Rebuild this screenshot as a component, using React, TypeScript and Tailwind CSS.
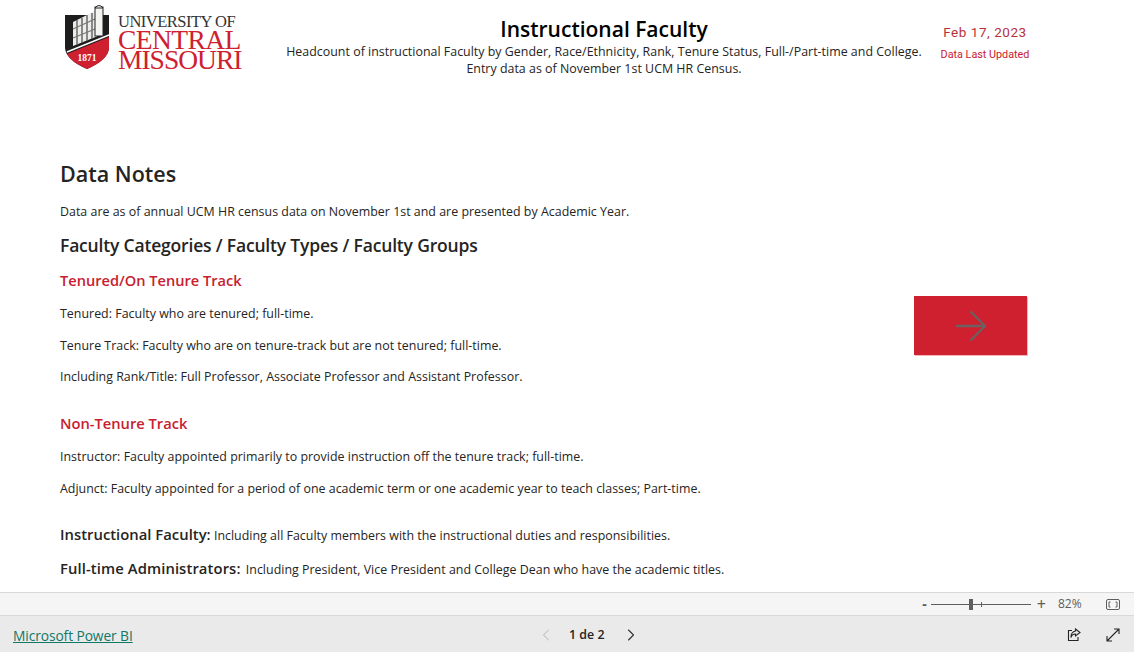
import { ChevronLeft, ChevronRight, ArrowRight } from "lucide-react";

const sans = "font-['Open_Sans','Noto_Sans',sans-serif]";

function Logo() {
  return (
    <div className="flex items-start w-[176px] h-[72px]">
      <svg width="46" height="68" viewBox="0 0 46 68" className="shrink-0 mt-[2px]">
        <path d="M1 11 L45 11 L45 44 Q44 56 23 65 Q2 56 1 44 Z" fill="#1d1d1d" />
        <path d="M9 18 L31 7 L39 7 L39 30 L9 42 Z" fill="#ecece9" />
        <path d="M13 16 v25 M18 14 v25 M23 11 v26 M28 9 v26" stroke="#555" strokeWidth="1.3" />
        <path d="M9 25 L31 15 M9 34 L31 25" stroke="#777" strokeWidth="1.1" />
        <rect x="31" y="3" width="8" height="29" fill="#f4f4f2" stroke="#222" strokeWidth="1" />
        <path d="M31 4 Q35 -1 39 4 Z" fill="#f4f4f2" stroke="#222" strokeWidth="1" />
        <path d="M3 50 L45 33 L45 44 Q44 56 23 65 Q7 58 3 50 Z" fill="#cf2030" />
        <path d="M3 48 L45 31" stroke="#fff" strokeWidth="1.5" />
        <text x="23" y="57" textAnchor="middle" fontSize="9.5" fontWeight="700" fill="#fff" fontFamily="Liberation Serif, serif">1871</text>
      </svg>
      <div className="ml-[8px] font-['Liberation_Serif',serif] leading-none mt-[12px]">
        <div className="text-[16.5px] leading-[15px] text-[#333] tracking-[-0.5px] whitespace-nowrap">UNIVERSITY OF</div>
        <div className="text-[27.5px] leading-[21px] text-[#cf2030] tracking-[-0.6px] whitespace-nowrap">CENTRAL</div>
        <div className="text-[27.5px] leading-[21px] text-[#cf2030] tracking-[-1px] whitespace-nowrap -mt-px">MISSOURI</div>
      </div>
    </div>
  );
}

function Header() {
  return (
    <header className="flex h-[78px] pl-[64px] pt-[2px]">
      <Logo />
      <div className="w-[660px] ml-[34px] text-center text-[#252423] pt-[13px]">
        <h1 className={`${sans} text-[21px] leading-[28px] font-semibold text-black`}>Instructional Faculty</h1>
        <p className={`${sans} text-[12.4px] leading-[17px] tracking-[0.02px] whitespace-nowrap`}>
          Headcount of instructional Faculty by Gender, Race/Ethnicity, Rank, Tenure Status, Full-/Part-time and College.
        </p>
        <p className={`${sans} text-[12.4px] leading-[17px] tracking-[0.02px]`}>Entry data as of November 1st UCM HR Census.</p>
      </div>
      <div className="ml-[6px] w-[90px] text-center text-[#c8202f] font-['Roboto',sans-serif] pt-[21px]">
        <div className="text-[13.5px] leading-[18px] tracking-[0.55px] text-[#b8323a] whitespace-nowrap">Feb 17, 2023</div>
        <div className="text-[10.8px] leading-[14px] mt-[7px] whitespace-nowrap">Data Last Updated</div>
      </div>
    </header>
  );
}

function Body({ children, className = "" }: { children: React.ReactNode; className?: string }) {
  return <p className={`${sans} text-[12.4px] leading-[18px] tracking-[0.02px] text-[#252423] whitespace-nowrap ${className}`}>{children}</p>;
}

function Notes() {
  return (
    <div className="w-[914px] shrink-0 pl-[60px] pt-[81px]">
      <h2 className={`${sans} text-[21.5px] leading-[30px] font-semibold text-[#252423]`}>Data Notes</h2>
      <Body className="mt-[14px]">Data are as of annual UCM HR census data on November 1st and are presented by Academic Year.</Body>
      <h3 className={`${sans} text-[17.5px] leading-[24px] font-semibold text-[#252423] mt-[12px] tracking-[-0.18px]`}>Faculty Categories / Faculty Types / Faculty Groups</h3>
      <h4 className={`${sans} text-[14.6px] leading-[20px] font-semibold text-[#c8202f] mt-[13px]`}>Tenured/On Tenure Track</h4>
      <Body className="mt-[15px]">Tenured: Faculty who are tenured; full-time.</Body>
      <Body className="mt-[14px]">Tenure Track: Faculty who are on tenure-track but are not tenured; full-time.</Body>
      <Body className="mt-[13px]">Including Rank/Title: Full Professor, Associate Professor and Assistant Professor.</Body>
      <h4 className={`${sans} text-[14.7px] leading-[20px] font-semibold text-[#c8202f] mt-[27px]`}>Non-Tenure Track</h4>
      <Body className="mt-[15px]">Instructor: Faculty appointed primarily to provide instruction off the tenure track; full-time.</Body>
      <Body className="mt-[14px]">Adjunct: Faculty appointed for a period of one academic term or one academic year to teach classes; Part-time.</Body>
      <Body className="mt-[27px]">
        <span className="text-[14.8px] font-semibold">Instructional Faculty:</span> Including all Faculty members with the instructional duties and responsibilities.
      </Body>
      <Body className="mt-[14px]">
        <span className="text-[14.8px] font-semibold tracking-[0.1px] mr-[2px]">Full-time Administrators:</span> Including President, Vice President and College Dean who have the academic titles.
      </Body>
    </div>
  );
}

function ZoomBar() {
  return (
    <div className="h-[24px] bg-[#f5f5f5] border-t border-b border-[#d9d9d9] flex items-center justify-end text-[#605e5c]">
      <span className="text-[14px] font-bold leading-none">-</span>
      <div className="relative w-[100px] h-px bg-[#605e5c] ml-[4px]">
        <div className="absolute left-[38px] -top-[5px] w-[4px] h-[11px] bg-[#605e5c]" />
        <div className="absolute left-[50px] -top-[2px] w-px h-[5px] bg-[#605e5c]" />
      </div>
      <span className="text-[16px] leading-none ml-[6px]">+</span>
      <span className={`${sans} text-[12px] ml-[12px] w-[35px]`}>82%</span>
      <svg width="14" height="11" viewBox="0 0 14 11" fill="none" className="ml-[13px] mr-[14px]" stroke="#605e5c">
        <rect x="0.5" y="0.5" width="13" height="10" rx="1.5" />
        <path d="M4.5 3H3V8H4.5M9.5 3H11V8H9.5" />
      </svg>
    </div>
  );
}

function Footer() {
  return (
    <footer className="h-[36px] bg-[#eaeaea] flex items-center">
      <a className={`${sans} text-[13.8px] tracking-[-0.1px] underline text-[#117865] ml-[13px] mt-[4px] w-[520px]`}>Microsoft Power BI</a>
      <ChevronLeft size={20} strokeWidth={1} className="text-[#a6a6a6] ml-[3px] mt-[2px]" />
      <span className={`${sans} text-[12.4px] font-semibold text-[#252423] ml-[13px] mt-[2px] w-[52px] whitespace-nowrap`}>1 de 2</span>
      <ChevronRight size={20} strokeWidth={1.3} className="text-[#333] mt-[2px]" />
      <svg width="14" height="14" viewBox="0 0 14 14" fill="none" stroke="#252423" strokeWidth="1.1" className="ml-auto mt-[1px]">
        <path d="M5 2.5H1.5V12.5H11V9" />
        <path d="M8.5 1L13 4.5L8.5 8V6C6 6 4.5 7.5 4 9.5C4 6 5.5 3.5 8.5 3Z" />
      </svg>
      <svg width="14" height="14" viewBox="0 0 14 14" fill="none" stroke="#252423" strokeWidth="1.1" className="ml-[25px] mr-[14px] mt-[2px]">
        <path d="M1 13L13 1M8 1H13V6M1 8V13H6" />
      </svg>
    </footer>
  );
}

export default function App() {
  return (
    <div className="w-[1134px] h-[652px] bg-white overflow-hidden flex flex-col">
      <div className="h-[592px] overflow-hidden">
        <Header />
        <div className="flex items-start">
          <Notes />
          <button className="w-[113px] h-[59px] bg-[#cf2030] mt-[218px] flex items-center justify-center shadow-[1px_1px_0_#f3b5ba]">
            <ArrowRight size={48} strokeWidth={1.2} className="text-[#6d6060]" />
          </button>
        </div>
      </div>
      <ZoomBar />
      <Footer />
    </div>
  );
}
